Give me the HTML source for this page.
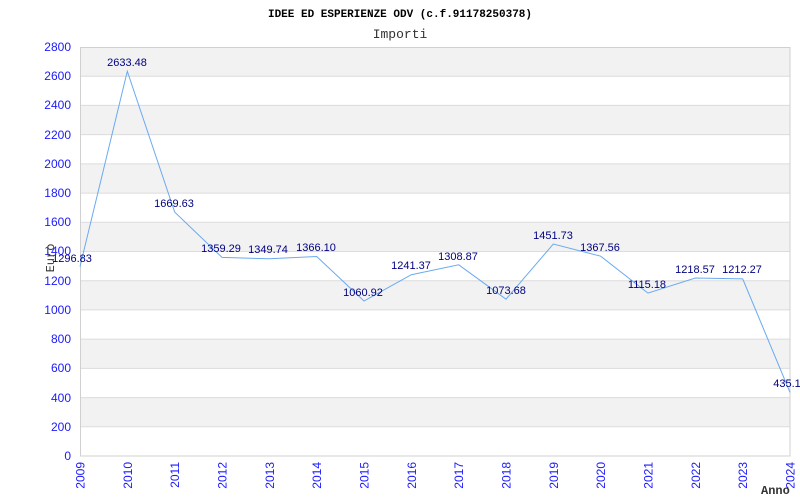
<!DOCTYPE html>
<html><head><style>body{margin:0;background:#fff}svg{display:block}</style></head><body>
<svg width="800" height="500" xmlns="http://www.w3.org/2000/svg">
<rect width="800" height="500" fill="#fff"/>
<g fill="#f2f2f2">
<rect x="80" y="47" width="710" height="29.2"/>
<rect x="80" y="105.4" width="710" height="29.2"/>
<rect x="80" y="163.9" width="710" height="29.2"/>
<rect x="80" y="222.3" width="710" height="29.2"/>
<rect x="80" y="280.7" width="710" height="29.2"/>
<rect x="80" y="339.1" width="710" height="29.2"/>
<rect x="80" y="397.6" width="710" height="29.2"/>
</g>
<g stroke="#dcdcdc" stroke-width="1">
<line x1="80" x2="790" y1="76.2" y2="76.2"/><line x1="80" x2="790" y1="105.4" y2="105.4"/>
<line x1="80" x2="790" y1="134.6" y2="134.6"/><line x1="80" x2="790" y1="163.9" y2="163.9"/>
<line x1="80" x2="790" y1="193.1" y2="193.1"/><line x1="80" x2="790" y1="222.3" y2="222.3"/>
<line x1="80" x2="790" y1="251.5" y2="251.5"/><line x1="80" x2="790" y1="280.7" y2="280.7"/>
<line x1="80" x2="790" y1="309.9" y2="309.9"/><line x1="80" x2="790" y1="339.1" y2="339.1"/>
<line x1="80" x2="790" y1="368.4" y2="368.4"/><line x1="80" x2="790" y1="397.6" y2="397.6"/>
<line x1="80" x2="790" y1="426.8" y2="426.8"/>
</g>
<rect x="80.5" y="47.5" width="709.5" height="408.5" fill="none" stroke="#d0d0d0"/>
<text x="400" y="17" text-anchor="middle" font-family="Liberation Mono,monospace" font-weight="bold" font-size="11">IDEE ED ESPERIENZE ODV (c.f.91178250378)</text>
<text x="400" y="38" text-anchor="middle" font-family="Liberation Mono,monospace" font-size="13" fill="#333">Importi</text>
<g font-family="Liberation Sans,sans-serif" font-size="12" fill="#1a1aff" text-anchor="end">
<text x="71" y="51">2800</text><text x="71" y="80">2600</text><text x="71" y="109">2400</text><text x="71" y="139">2200</text><text x="71" y="168">2000</text><text x="71" y="197">1800</text><text x="71" y="226">1600</text><text x="71" y="255">1400</text><text x="71" y="285">1200</text><text x="71" y="314">1000</text><text x="71" y="343">800</text><text x="71" y="372">600</text><text x="71" y="402">400</text><text x="71" y="431">200</text><text x="71" y="460">0</text>
</g>
<g font-family="Liberation Sans,sans-serif" font-size="12" fill="#1a1aff" text-anchor="end">
<text transform="translate(84.5,462) rotate(-90)">2009</text>
<text transform="translate(131.8,462) rotate(-90)">2010</text>
<text transform="translate(179.2,462) rotate(-90)">2011</text>
<text transform="translate(226.5,462) rotate(-90)">2012</text>
<text transform="translate(273.8,462) rotate(-90)">2013</text>
<text transform="translate(321.2,462) rotate(-90)">2014</text>
<text transform="translate(368.5,462) rotate(-90)">2015</text>
<text transform="translate(415.8,462) rotate(-90)">2016</text>
<text transform="translate(463.2,462) rotate(-90)">2017</text>
<text transform="translate(510.5,462) rotate(-90)">2018</text>
<text transform="translate(557.8,462) rotate(-90)">2019</text>
<text transform="translate(605.2,462) rotate(-90)">2020</text>
<text transform="translate(652.5,462) rotate(-90)">2021</text>
<text transform="translate(699.8,462) rotate(-90)">2022</text>
<text transform="translate(747.2,462) rotate(-90)">2023</text>
<text transform="translate(794.5,462) rotate(-90)">2024</text>
</g>
<text transform="translate(54,258) rotate(-90)" text-anchor="middle" font-family="Liberation Mono,monospace" font-size="12" fill="#333">Euro</text>
<text x="761" y="494" font-family="Liberation Mono,monospace" font-weight="bold" font-size="12" fill="#333">Anno</text>
<polyline fill="none" stroke="#6aaaf0" stroke-width="1" points="80,266.6 127.3,71.3 174.7,212.1 222,257.4 269.3,258.8 316.7,256.5 364,301 411.3,274.7 458.7,264.8 506,299.2 553.3,244 600.7,256.2 648,293.1 695.3,278 742.7,278.9 790,392.4"/>
<g font-family="Liberation Sans,sans-serif" font-size="11" fill="#000080" text-anchor="middle">
<text x="72" y="262">1296.83</text>
<text x="127" y="66">2633.48</text>
<text x="174" y="207">1669.63</text>
<text x="221" y="252">1359.29</text>
<text x="268" y="253">1349.74</text>
<text x="316" y="251">1366.10</text>
<text x="363" y="296">1060.92</text>
<text x="411" y="269">1241.37</text>
<text x="458" y="260">1308.87</text>
<text x="506" y="294">1073.68</text>
<text x="553" y="239">1451.73</text>
<text x="600" y="251">1367.56</text>
<text x="647" y="288">1115.18</text>
<text x="695" y="273">1218.57</text>
<text x="742" y="273">1212.27</text>
<text x="787" y="387">435.1</text>
</g>
</svg>
</body></html>
